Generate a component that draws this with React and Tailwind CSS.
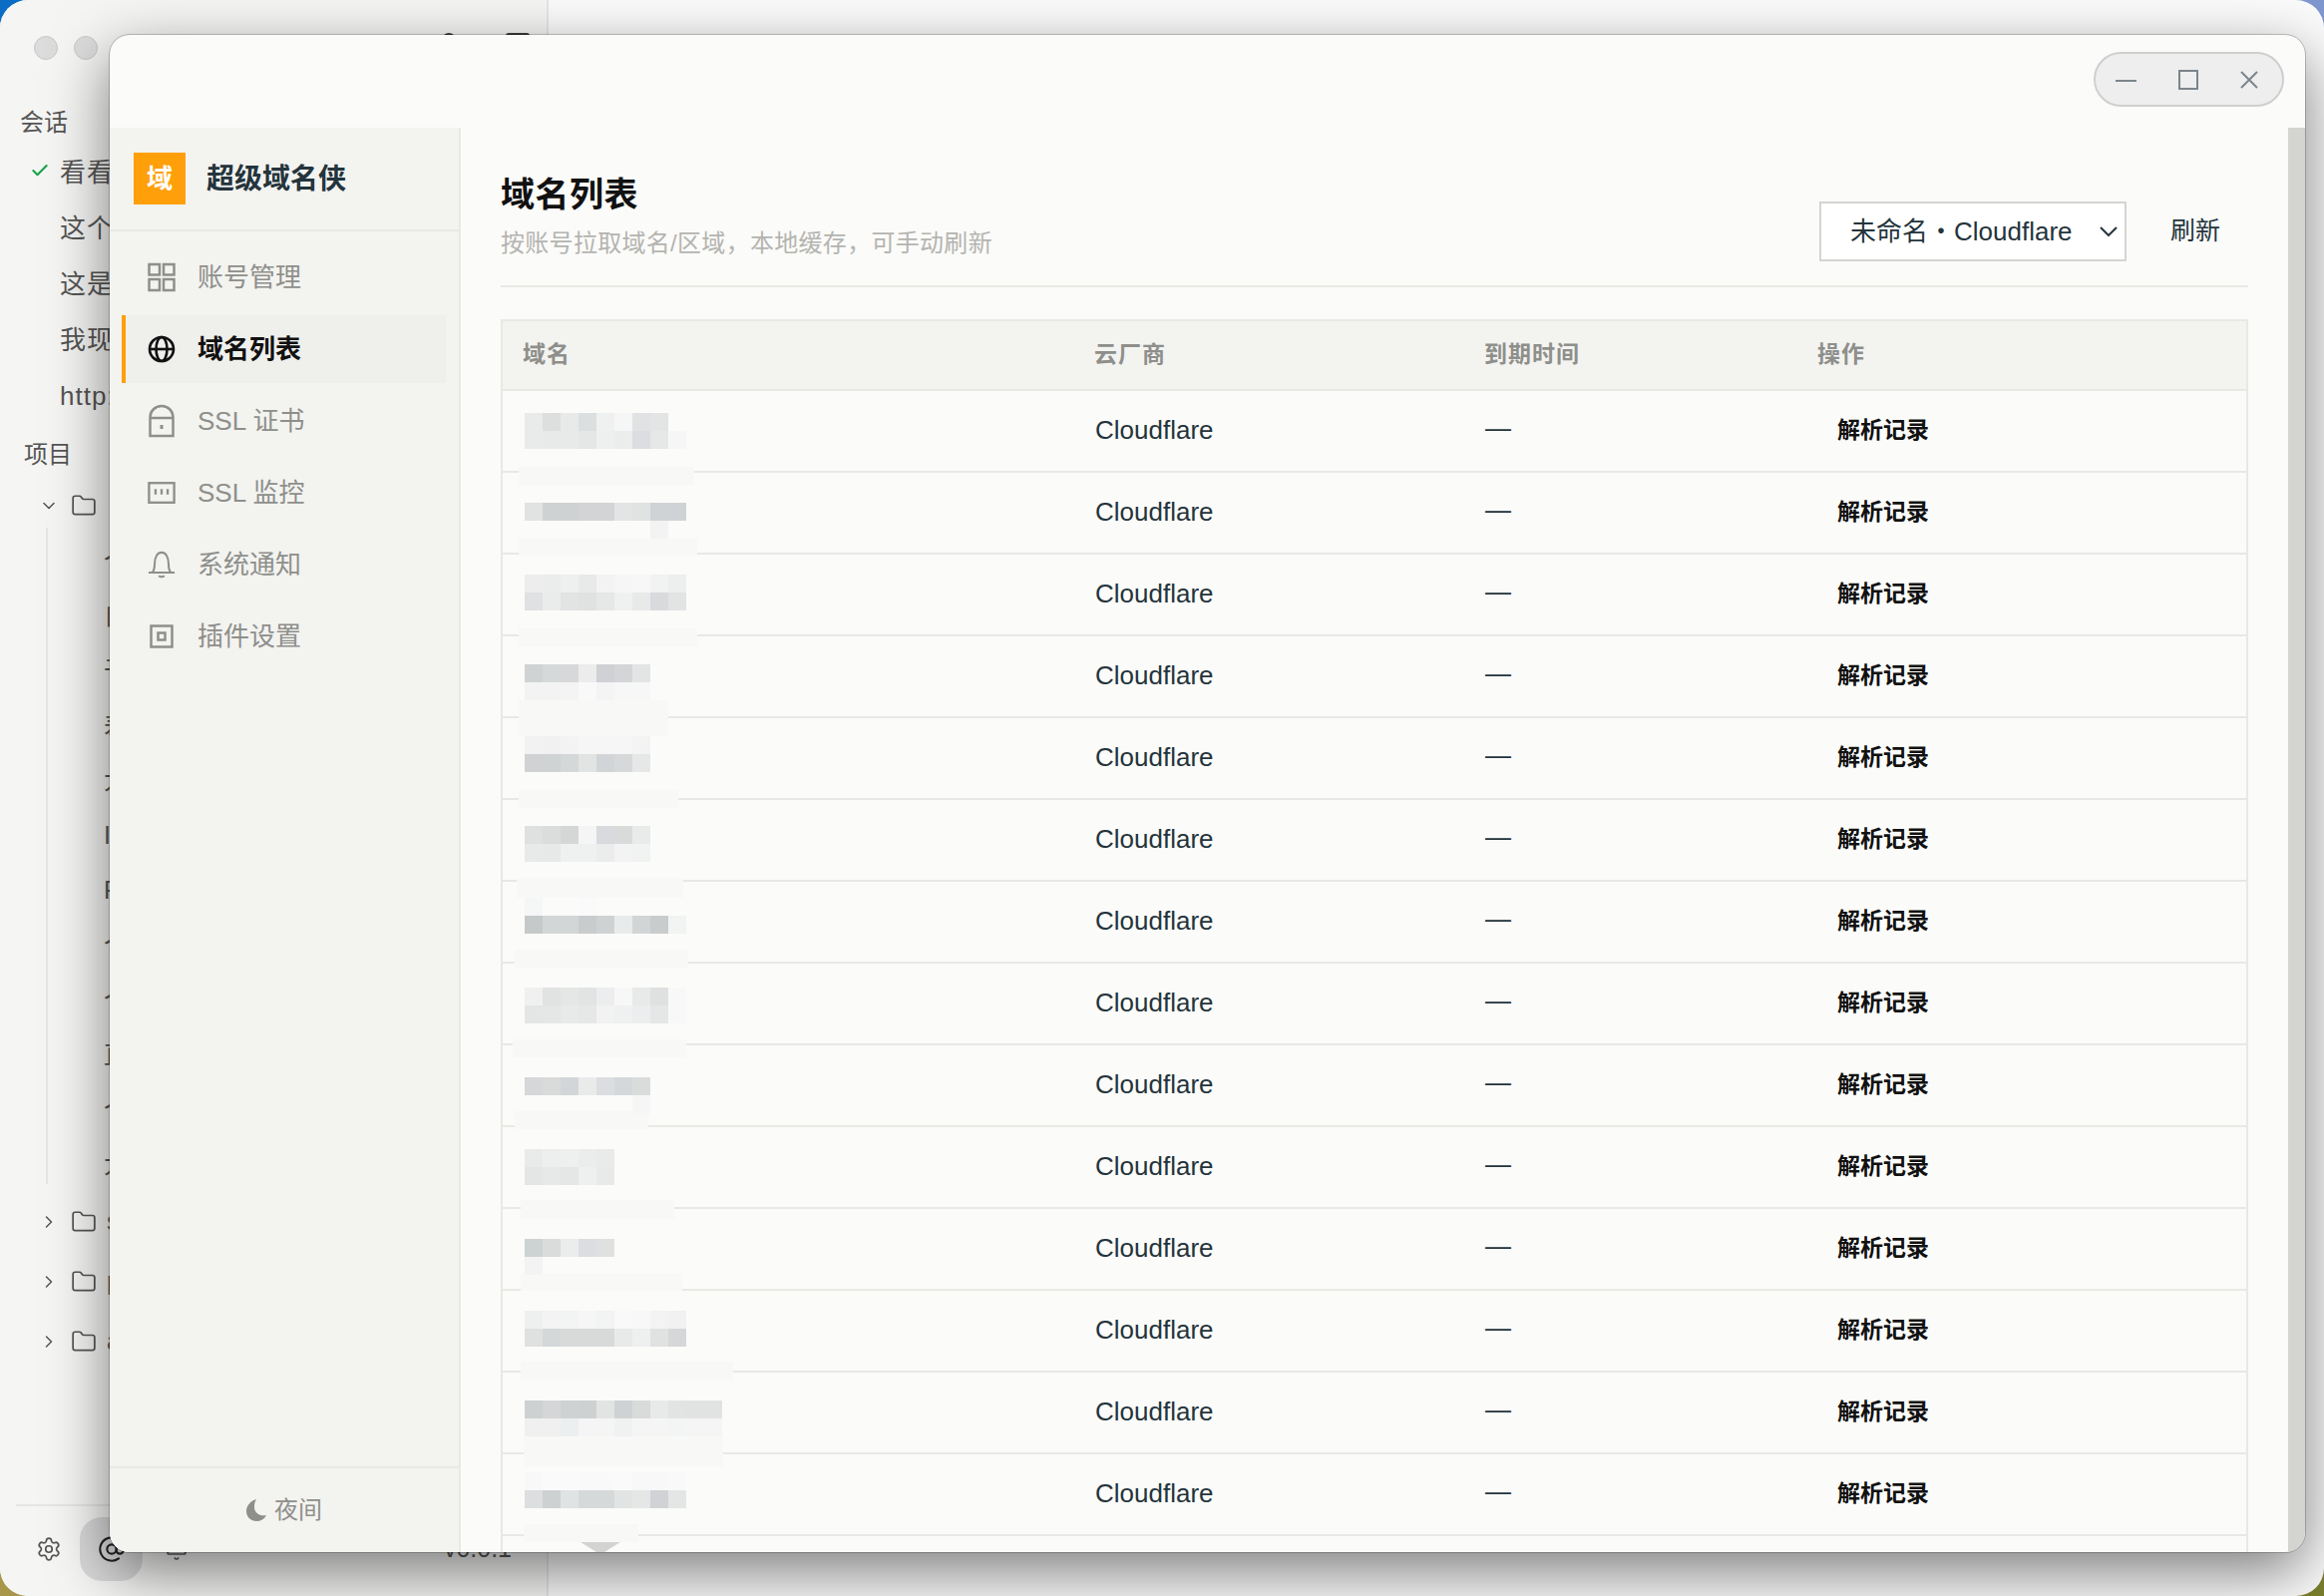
import { AtSign, Bell, Check, ChevronDown, ChevronRight, Folder, Settings } from 'lucide-react';

const FONT = "font-['Liberation_Sans','Noto_Sans_CJK_SC',sans-serif]";

const CHATS = ['看看这个页面的问题', '这个功能还需要调整', '这是什么原因导致的', '我现在想要重新开始', 'http://localhost:3000'];
const CHILDREN = ['个人项目', '自动化', '于是开始', '差异对比', '大纲', 'Index', 'Readme', '个人笔记', '个性化', '直接运行', '个别问题', '大模型'];

// [top y, first line, second line] - the redacted domain names
const MOSAICS = [
    [414, ['#e9eaea', '#dddfdf', '#e8e9e9', '#dcdfe0', '#eff0f0', '#f5f6f5', '#e1e2e3', '#e3e4e4', null], ['#e9eaea', '#e8e9e9', '#e8e9e9', '#e5e6e6', '#eeefef', '#ebecec', '#dcdde0', '#e6e7e7', '#f6f6f6']],
    [504, ['#e1e3e3', '#cfd2d3', '#cfd2d3', '#d2d4d5', '#d2d4d5', '#e3e5e5', '#e1e3e3', '#d0d3d5', '#d0d3d5'], [null, null, null, null, null, null, null, '#f3f3f4', null]],
    [576, ['#ecedec', '#ebecec', '#eeefef', '#e8eaea', '#f3f3f3', '#f6f6f6', '#f7f7f7', '#f1f2f2', '#edeeee'], ['#e0e1e2', '#eaebeb', '#e2e3e3', '#e0e2e2', '#e6e7e7', '#eff0f0', '#e8e9e9', '#d8dadc', '#e2e3e3']],
    [666, ['#d0d3d4', '#d6d9d9', '#d6d8d9', '#ececec', '#d0d1d4', '#d3d5d6', '#e3e5e5'], ['#f3f3f4', '#f3f3f4', '#f4f4f4', '#f9f9f9', '#f4f4f5', '#f7f7f8', '#f7f7f7']],
    [738, ['#f2f2f2', '#f1f1f1', '#f2f3f2', '#f6f6f6', '#f6f6f6', '#f6f6f6', '#f3f3f3'], ['#d0d2d3', '#d0d3d4', '#d5d8d9', '#e2e4e4', '#d2d5d7', '#d6d8d9', '#e6e8e8']],
    [828, ['#dfe0e0', '#dbdddd', '#d5d7d6', '#f5f5f5', '#d9dadd', '#d9dbdb', '#e9ebeb'], ['#e8e9e9', '#e7e9e9', '#eff0f0', '#eff0f0', '#ebecec', '#f3f3f3', '#f1f2f2']],
    [900, ['#f5f6f6', null, null, '#fafafa', null, null, null, null, null], ['#c6c9ca', '#d3d6d7', '#d3d6d7', '#c9cccd', '#cfd2d3', '#e9ebeb', '#d2d5d6', '#c9cccd', '#f2f3f3']],
    [990, ['#f0f0f0', '#e1e3e3', '#e5e6e6', '#e2e4e4', '#ecedee', '#f7f7f7', '#e8eaea', '#dfe1e1', '#f8f8f8'], ['#e4e6e6', '#e5e7e7', '#e8eaea', '#e6e8e8', '#f2f2f2', '#eff0f0', '#ecedee', '#e5e6e6', '#f8f8f8']],
    [1080, ['#d5d7d8', '#d9dbda', '#d3d6d8', '#e9ebeb', '#dcdde0', '#d5d8da', '#dadcdc'], [null, null, null, null, null, null, '#f6f6f6']],
    [1152, ['#e9eaea', '#edeeee', '#eeefef', '#ebecec', '#e9eaea'], ['#e4e6e6', '#e7e8e8', '#e5e7e7', '#eef0f0', '#e8e9e9']],
    [1242, ['#cdd2d3', '#dadcdc', '#ebeded', '#dcdde0', '#dfe1e1'], ['#f3f3f3']],
    [1314, ['#eeefef', '#f3f3f3', '#f2f3f3', '#f6f6f6', '#f2f3f3', '#f9f9f9', '#f8f8f8', '#f3f3f3', '#f1f1f1'], ['#dfe1e1', '#d5d8d9', '#d8dada', '#d8dada', '#d8dada', '#e8e9e9', '#eeefef', '#e0e2e2', '#d5d7d8']],
    [1404, ['#cdd1d2', '#d5d6d8', '#cfd2d3', '#cdd1d2', '#e2e3e3', '#cfd2d4', '#d9dbdb', '#e8e9e9', '#e2e4e4', '#e1e3e3', '#e1e3e3'], ['#f0f0f0', '#f0f0f0', '#ecefef', '#f5f5f5', '#f5f5f5', '#f0f1f1', '#f5f5f5', '#f5f5f5', '#f3f4f4', '#f5f5f5', '#f5f5f5']],
    [1476, ['#f8f8f8', '#fafafa', '#fafafa', '#f9f9f9', '#f9f9f9', '#fafafa', '#f8f8f8', '#f8f8f8', '#f9f9f9'], ['#dcdee0', '#cdd1d2', '#e0e3e3', '#d5d9da', '#d5d9da', '#e2e4e4', '#e5e6e6', '#d0d2d5', '#e4e6e6']],
];

// pale patches that run over the row lines: [y1, y2, x1, x2]
const SMUDGES = [
    [468, 486, 520, 696], [540, 558, 520, 699], [630, 648, 520, 699], [702, 738, 520, 670],
    [792, 810, 520, 680], [880, 900, 518, 685], [952, 970, 516, 690], [1042, 1060, 514, 688],
    [1114, 1132, 516, 650], [1203, 1222, 522, 676], [1276, 1294, 522, 684], [1365, 1384, 522, 735],
    [1440, 1470, 525, 725], [1528, 1546, 525, 640],
];

function GridIcon() {
    return (
        <svg width="28" height="30" viewBox="0 0 28 30" fill="none" stroke="currentColor" strokeWidth="2.5">
            <rect x="1.5" y="2" width="10.5" height="10.5" />
            <rect x="16" y="2" width="10.5" height="10.5" />
            <rect x="1.5" y="17" width="10.5" height="11" />
            <rect x="16" y="17" width="10.5" height="11" />
        </svg>
    );
}

function GlobeIcon() {
    return (
        <svg width="28" height="28" viewBox="0 0 28 28" fill="none" stroke="currentColor" strokeWidth="2.6">
            <circle cx="14" cy="14" r="12" />
            <ellipse cx="14" cy="14" rx="5.5" ry="12" />
            <path d="M2 14h24" />
        </svg>
    );
}

function LockIcon() {
    return (
        <svg width="28" height="34" viewBox="0 0 28 34" fill="none" stroke="currentColor" strokeWidth="2.5">
            <path d="M2.5 32V13a11.5 11 0 0 1 23 0V32zM2.5 14h23" />
            <rect x="12.5" y="21" width="3" height="4" fill="currentColor" stroke="none" />
        </svg>
    );
}

function MonitorIcon() {
    return (
        <svg width="30" height="24" viewBox="0 0 30 24" fill="none" stroke="currentColor" strokeWidth="2.5">
            <rect x="1.5" y="1.5" width="27" height="21" />
            <path d="M8.5 8v6M15 8v6M21.5 8v6" />
        </svg>
    );
}

function BellIcon() {
    return (
        <svg width="30" height="30" viewBox="0 0 30 30" fill="none" stroke="currentColor" strokeWidth="2.2">
            <path d="M1 23.5h28M5 23.5c2-2 2.500-4 2.500-9C7.500 6 11 2 15 2s7.500 4 7.500 12.500c0 5 .5 7 2.500 9" />
            <path d="M12 27c1.500 1.500 4.500 1.500 6 0" />
        </svg>
    );
}

function PluginIcon() {
    return (
        <svg width="24" height="24" viewBox="0 0 24 24" fill="none" stroke="currentColor" strokeWidth="2.5">
            <rect x="1.500" y="1.500" width="21" height="21" />
            <rect x="8.500" y="8.500" width="7" height="7" />
        </svg>
    );
}

const NAV = [
    { label: '账号管理', Icon: GridIcon },
    { label: '域名列表', Icon: GlobeIcon, active: true },
    { label: 'SSL 证书', Icon: LockIcon },
    { label: 'SSL 监控', Icon: MonitorIcon },
    { label: '系统通知', Icon: BellIcon },
    { label: '插件设置', Icon: PluginIcon },
];

function BackWindow() {
    return (
        <div className="flex h-[1600px] w-[2330px] overflow-hidden rounded-[28px] bg-[#fbfbfb]">
            <aside className="flex h-full w-[550px] flex-col border-r-2 border-[#e6e6e6] bg-[#f5f5f4] text-[#555555]">
                <div className="flex h-[101px] shrink-0 items-start gap-[16px] pl-[34px] pt-[36px]">
                    <span className="h-[24px] w-[24px] rounded-full border border-[#c8c8c8] bg-[#dcdcdc]" />
                    <span className="h-[24px] w-[24px] rounded-full border border-[#c8c8c8] bg-[#dcdcdc]" />
                    <span className="ml-[329px] mt-[-3px] h-[14px] w-[14px] rounded-full bg-[#3c3c3c]" />
                    <span className="ml-[34px] mt-[-3px] h-[10px] w-[24px] rounded-t-[3px] bg-[#3c3c3c]" />
                </div>
                <div className="flex h-[44px] items-center pl-[20px] text-[24px]">会话</div>
                {CHATS.map((chat, i) => (
                    <div key={chat} className="relative flex h-[56px] items-center pl-[60px] text-[26px] tracking-[1px]">
                        {i === 0 && <Check size={20} strokeWidth={2.5} className="absolute left-[30px] top-[16px] text-[#16a34a]" />}
                        <span className="whitespace-nowrap">{chat}</span>
                    </div>
                ))}
                <div className="flex h-[61px] items-center pl-[24px] text-[24px]">项目</div>
                <div className="flex h-[42px] items-center pl-[39px]">
                    <ChevronDown size={20} strokeWidth={1.8} />
                    <Folder size={26} strokeWidth={1.6} className="ml-[12px]" />
                </div>
                <div className="relative mt-[7px] pl-[104px]">
                    <div className="absolute bottom-[8px] left-[46px] top-[-6px] w-[2px] bg-[#e6e6e6]" />
                    {CHILDREN.map((child) => (
                        <div key={child} className="flex h-[55px] items-center whitespace-nowrap text-[25px]">{child}</div>
                    ))}
                </div>
                {['src', 'packages', 'assets'].map((name) => (
                    <div key={name} className="flex h-[60px] items-center pl-[39px]">
                        <ChevronRight size={20} strokeWidth={1.8} />
                        <Folder size={26} strokeWidth={1.6} className="ml-[12px]" />
                        <span className="ml-[10px] text-[25px]">{name}</span>
                    </div>
                ))}
                <div className="mx-[16px] mt-auto flex h-[92px] items-center border-t-2 border-[#e6e6e6] pb-[4px]">
                    <Settings size={26} strokeWidth={1.6} className="ml-[20px]" />
                    <span className="ml-[18px] flex h-[64px] w-[63px] items-center justify-center rounded-[22px] bg-[#d9d9d9]">
                        <AtSign size={28} strokeWidth={1.8} className="text-[#222222]" />
                    </span>
                    <Bell size={24} strokeWidth={1.6} className="ml-[22px]" />
                    <span className="ml-auto mr-[19px] text-[25px]">v0.0.1</span>
                </div>
            </aside>
            <div className="flex-1" />
        </div>
    );
}

function WindowControls() {
    return (
        <div className="flex h-[93px] shrink-0 justify-end pr-[21px] pt-[17px]">
            <div className="flex h-[55px] w-[191px] items-center justify-between rounded-full border-2 border-[#cfcfcf] bg-[#eeeeee] pl-[20px] pr-[24px]">
                <svg width="21" height="20" viewBox="0 0 21 20" fill="none" stroke="#7c858c" strokeWidth="2">
                    <path d="M0 11h21" />
                </svg>
                <svg width="20" height="20" viewBox="0 0 20 20" fill="none" stroke="#7c858c" strokeWidth="2">
                    <rect x="1" y="1" width="18" height="18" />
                </svg>
                <svg width="18" height="18" viewBox="0 0 18 18" fill="none" stroke="#7c858c" strokeWidth="2">
                    <path d="M1 1l16 16M17 1L1 17" />
                </svg>
            </div>
        </div>
    );
}

function Sidebar() {
    return (
        <aside className="flex w-[352px] shrink-0 flex-col border-r-2 border-[#e8e8e5] bg-[#f3f3f0]">
            <div className="flex h-[104px] shrink-0 items-center gap-[21px] border-b-2 border-[#e8e8e5] pl-[24px]">
                <div className="flex h-[52px] w-[52px] items-center justify-center bg-[#ff9f0a] text-[26px] font-bold text-white">域</div>
                <span className="pt-[2px] text-[28px] font-bold text-[#24343c]">超级域名侠</span>
            </div>
            <nav className="flex flex-col gap-1 pl-[12px] pr-[13px] pt-[12px]">
                {NAV.map(({ label, Icon, active }) => (
                    <div
                        key={label}
                        className={`flex h-[68px] items-center border-l-4 ${active ? 'border-[#ff9f0a] bg-[#efefec] font-bold text-[#111111]' : 'border-transparent text-[#8e8f8b]'}`}
                    >
                        <span className="flex w-[50px] shrink-0 justify-center pl-[22px]">
                            <Icon />
                        </span>
                        <span className="ml-[22px] whitespace-pre text-[26px]">{label}</span>
                    </div>
                ))}
            </nav>
            <div className="mt-auto flex h-[86px] items-center justify-center gap-[8px] border-t-2 border-[#e8e8e5] text-[24px] text-[#8e8f8b]">
                <svg width="20" height="24" viewBox="0 0 20 24" fill="currentColor">
                    <path d="M10 1C3.500 3 0 8 0 13c0 6 5 10 10 10 4.500 0 8-2 10-6-6 1.500-12-2-12-8 0-3 .5-6 2-8z" />
                </svg>
                <span>夜间</span>
            </div>
        </aside>
    );
}

function DomainRow() {
    return (
        <div className="grid h-[82px] grid-cols-[573px_391px_334px_1fr] items-center border-b-2 border-[#e8e8e5] pb-[2px] pl-[21px] text-[26px] text-[#24343c]">
            <span />
            <span>Cloudflare</span>
            <span className="pb-[4px]">—</span>
            <span className="pl-[19px] text-[23px] font-bold text-[#111111]">解析记录</span>
        </div>
    );
}

function Redaction() {
    return (
        <div className="absolute inset-0">
            {SMUDGES.map(([y1, y2, x1, x2]) => (
                <div
                    key={y1}
                    className="absolute bg-[#f8f8f7]"
                    style={{ top: y1 - 322, height: y2 - y1, left: x1 - 504, width: x2 - x1 }}
                />
            ))}
            {MOSAICS.map(([y, ...lines]) =>
                lines.map((line, l) =>
                    line.map((color, c) =>
                        color ? (
                            <div
                                key={`${y}-${l}-${c}`}
                                className="absolute h-[18px] w-[18px]"
                                style={{ top: y - 322 + l * 18, left: 22 + c * 18, background: color }}
                            />
                        ) : null
                    )
                )
            )}
            <div className="absolute left-[78px] top-[1224px] h-[10px] w-[40px] bg-[#d3d3d1] [clip-path:polygon(0_0,100%_0,60%_100%,40%_100%)]" />
        </div>
    );
}

function Main() {
    return (
        <main className="min-w-0 flex-1 overflow-hidden pl-[40px] pr-[40px] pt-[45px]">
            <div className="flex items-end justify-between border-b-2 border-[#e8e8e5] pb-[24px]">
                <div>
                    <h1 className="text-[34px] font-bold leading-[44px] tracking-[0.5px] text-[#111111]">域名列表</h1>
                    <p className="mt-[10px] pb-[1px] text-[24px] leading-[34px] tracking-[0.3px] text-[#b4b4b0]">按账号拉取域名/区域，本地缓存，可手动刷新</p>
                </div>
                <div className="flex items-center">
                    <div className="flex h-[60px] w-[308px] items-center border-2 border-[#d4d4d2] bg-white pl-[29px] text-[26px] text-[#24343c]">
                        <span className="whitespace-nowrap">未命名・Cloudflare</span>
                        <svg width="18" height="10" viewBox="0 0 18 10" fill="none" stroke="#24343c" strokeWidth="2" className="ml-auto mr-[7px]">
                            <path d="M1 1l8 8 8-8" />
                        </svg>
                    </div>
                    <button type="button" className="ml-[44px] mr-[28px] text-[25px] text-[#24343c]">刷新</button>
                </div>
            </div>
            <div className="relative mt-[32px] border-x-2 border-t-2 border-[#e8e8e5]">
                <div className="grid h-[70px] grid-cols-[573px_391px_334px_1fr] items-center border-b-2 border-[#e8e8e5] bg-[#f3f3f0] pb-[2px] pl-[20px] text-[23px] font-bold tracking-[1px] text-[#8e8f8b]">
                    <span>域名</span>
                    <span>云厂商</span>
                    <span>到期时间</span>
                    <span>操作</span>
                </div>
                {Array.from({ length: 14 }, (_, i) => (
                    <DomainRow key={i} />
                ))}
                <div className="h-[82px]" />
                <Redaction />
            </div>
        </main>
    );
}

export default function App() {
    return (
        <div className={`relative h-[1600px] w-[2330px] overflow-hidden bg-[conic-gradient(#7f97cf_0_25%,#7a7f2e_25%_50%,#a8964a_50%_75%,#0a6cc4_75%)] ${FONT}`}>
            <BackWindow />
            <div className="absolute left-[110px] top-[35px] flex h-[1521px] w-[2201px] flex-col overflow-hidden rounded-[20px] bg-[#fbfbf9] shadow-[0_0_0_1px_rgba(0,0,0,0.2),0_20px_60px_rgba(0,0,0,0.5)]">
                <WindowControls />
                <div className="flex min-h-0 flex-1">
                    <Sidebar />
                    <Main />
                    <div className="w-[17px] shrink-0 bg-[#d4d5d0]" />
                </div>
            </div>
        </div>
    );
}
